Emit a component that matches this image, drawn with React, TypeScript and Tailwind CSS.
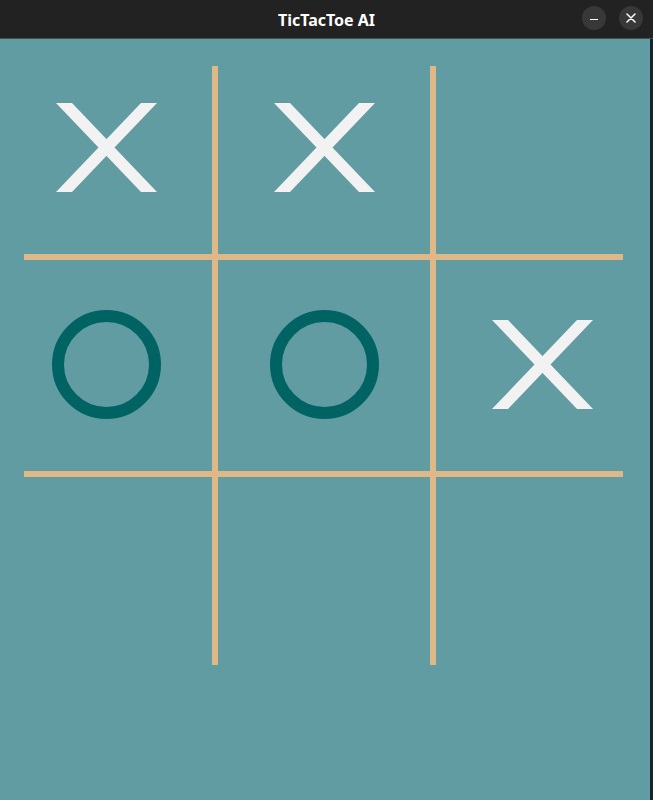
type Mark = "X" | "O" | null;

const board: Mark[][] = [
  ["X", "X", null],
  ["O", "O", "X"],
  [null, null, null],
];

// grid tracks: cell, line, cell, line, cell
const colStart = ["col-start-1", "col-start-3", "col-start-5"];
const rowStart = ["row-start-1", "row-start-3", "row-start-5"];
// the marks sit on an even 217px pitch, the outer cells are narrower
const colPad = ["pr-[23px]", "", "pl-[25px]"];
const rowPad = ["pb-[25px]", "pb-[2px]", "pt-[25px]"];

function XMark() {
  return (
    <svg width="101" height="89" viewBox="0 0 101 89" className="shrink-0">
      <polygon points="0,0 16,0 101,89 85,89" fill="#f2f2f2" />
      <polygon points="85,0 101,0 16,89 0,89" fill="#f2f2f2" />
    </svg>
  );
}

function OMark() {
  return (
    <div className="w-[109px] h-[109px] shrink-0 rounded-full border-[12px] border-[#006363]" />
  );
}

function TitleBar() {
  return (
    <div className="relative h-[39px] shrink-0 bg-[#222222] border-b border-[#3b5558] flex items-center justify-center">
      <span className="text-[16px] font-bold text-white font-['Noto_Sans',sans-serif] pt-[1px]">
        TicTacToe AI
      </span>
      <div className="absolute right-[10px] top-[6px] flex gap-[13px]">
        <button className="w-6 h-6 rounded-full bg-[#383838] flex items-center justify-center">
          <span className="block w-[8px] h-[1.5px] bg-white mt-[3px]" />
        </button>
        <button className="w-6 h-6 rounded-full bg-[#383838] flex items-center justify-center">
          <svg width="10" height="10" viewBox="0 0 10 10">
            <path d="M1 1 L9 9 M9 1 L1 9" stroke="white" strokeWidth="1.5" strokeLinecap="round" />
          </svg>
        </button>
      </div>
    </div>
  );
}

export default function App() {
  return (
    <div className="w-[653px] h-[800px] flex flex-col bg-[#222222] overflow-hidden">
      <TitleBar />
      <div className="flex-1 bg-[#619ca3] border-r-[3px] border-[#1c2328] pt-[27px] pl-[24px]">
        <div className="grid grid-cols-[188px_6px_212px_6px_187px] grid-rows-[188px_6px_211px_6px_188px]">
          {/* vertical lines */}
          <div className="col-start-2 row-start-1 row-span-5 bg-[#deb887]" />
          <div className="col-start-4 row-start-1 row-span-5 bg-[#deb887]" />
          {/* horizontal lines */}
          <div className="row-start-2 col-start-1 col-span-5 bg-[#deb887]" />
          <div className="row-start-4 col-start-1 col-span-5 bg-[#deb887]" />

          {board.map((row, r) =>
            row.map((mark, c) => (
              <div
                key={`${r}-${c}`}
                className={`${rowStart[r]} ${colStart[c]} ${colPad[c]} ${rowPad[r]} flex items-center justify-center`}
              >
                {mark === "X" && <XMark />}
                {mark === "O" && <OMark />}
              </div>
            ))
          )}
        </div>
      </div>
    </div>
  );
}
